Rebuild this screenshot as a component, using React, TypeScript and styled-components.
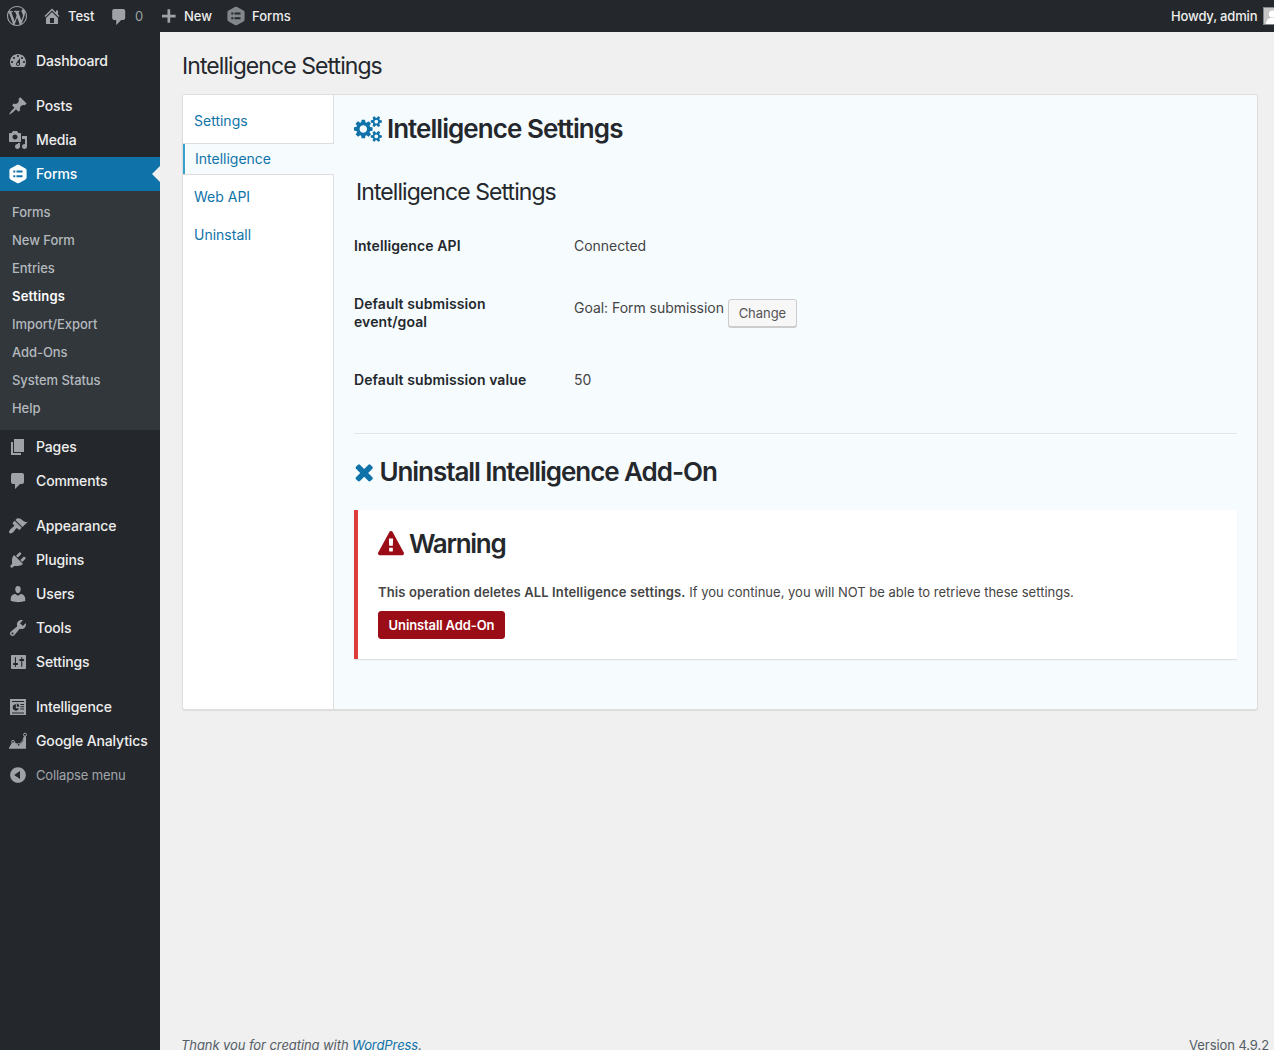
import React from "react";
import styled, { createGlobalStyle } from "styled-components";

const GlobalStyle = createGlobalStyle`
  html, body { margin: 0; padding: 0; height: 100%; overflow: hidden; background: #f0f0f0; }
  body { font-family: Inter, "Open Sans", sans-serif; font-size: 13px; color: #444; }
  * { box-sizing: border-box; }
  a { color: #0f73a9; text-decoration: none; }
  svg { display: block; flex: none; }
`;

/* ---------- icons ---------- */

const dashicons: Record<string, string> = {
  wordpress:
    "M20 10c0-5.51-4.49-10-10-10C4.48 0 0 4.49 0 10c0 5.52 4.48 10 10 10 5.51 0 10-4.48 10-10zM7.78 15.37L4.37 6.22c.55-.02 1.17-.08 1.17-.08.5-.06.44-1.13-.06-1.11 0 0-1.45.11-2.37.11-.18 0-.37 0-.58-.01C4.12 2.69 6.87 1.11 10 1.11c2.33 0 4.45.87 6.05 2.34-.68-.11-1.65.39-1.65 1.58 0 .74.45 1.36.9 2.1.35.61.55 1.36.55 2.46 0 1.49-1.4 5-1.4 5l-3.03-8.37c.54-.02.82-.17.82-.17.5-.05.44-1.25-.06-1.22 0 0-1.44.12-2.38.12-.87 0-2.33-.12-2.33-.12-.5-.03-.56 1.2-.06 1.22l.92.08 1.26 3.41zM17.41 10c.24-.64.74-1.87.43-4.25.7 1.29 1.05 2.71 1.05 4.25 0 3.29-1.73 6.24-4.4 7.78.97-2.59 1.94-5.2 2.92-7.78zM6.1 18.09C3.12 16.65 1.11 13.53 1.11 10c0-1.3.23-2.48.72-3.59C3.25 10.3 4.67 14.2 6.1 18.09zm4.03-6.63l2.58 6.98c-.86.29-1.76.45-2.71.45-.79 0-1.57-.11-2.29-.33.81-2.38 1.62-4.74 2.42-7.1z",
  home: "M16 8.5l1.53 1.53-1.06 1.06L10 4.6l-6.47 6.49-1.06-1.06L10 2.5l4 4v-2h2v4zm-6-2.46l6 5.99V18H4v-5.97zM12 17v-5H8v5h4z",
  plus: "M16.600 8.800v2.600h-5.400v5.300H8.500v-5.300H3V8.800h5.500V3.300h2.700v5.500z",
  dashboard:
    "M3.76 16h12.48c1.1-1.37 1.76-3.11 1.76-5 0-4.42-3.58-8-8-8s-8 3.58-8 8c0 1.89.66 3.63 1.76 5zM10 4c.55 0 1 .45 1 1s-.45 1-1 1-1-.45-1-1 .45-1 1-1zM6 6c.55 0 1 .45 1 1s-.45 1-1 1-1-.45-1-1 .45-1 1-1zm8 0c.55 0 1 .45 1 1s-.45 1-1 1-1-.45-1-1 .45-1 1-1zm-5.37 5.55L12 7v6c0 1.1-.9 2-2 2s-2-.9-2-2c0-.57.24-1.08.63-1.45zM4 10c.55 0 1 .45 1 1s-.45 1-1 1-1-.45-1-1 .45-1 1-1zm12 0c.55 0 1 .45 1 1s-.45 1-1 1-1-.45-1-1 .45-1 1-1zm-5 3c0-.55-.45-1-1-1s-1 .45-1 1 .45 1 1 1 1-.45 1-1z",
  posts:
    "M10.44 3.02l1.82-1.82 6.36 6.35-1.83 1.82c-1.05-.68-2.48-.57-3.41.36l-.75.75c-.92.93-1.04 2.35-.35 3.41l-1.83 1.82-2.41-2.41-2.8 2.79c-.42.42-3.38 2.71-3.8 2.29s1.86-3.39 2.28-3.81l2.79-2.79L4.1 9.36l1.83-1.82c1.05.69 2.48.57 3.4-.36l.75-.75c.93-.92 1.05-2.35.36-3.41z",
  media:
    "M13 11V4c0-.55-.45-1-1-1h-1.67L9 1H5L3.67 3H2c-.55 0-1 .45-1 1v7c0 .55.45 1 1 1h10c.55 0 1-.45 1-1zM7 4.5c1.38 0 2.5 1.12 2.5 2.5S8.38 9.5 7 9.5 4.5 8.38 4.5 7 5.62 4.5 7 4.5zM14 6h5v10.5c0 1.38-1.12 2.5-2.5 2.5S14 17.88 14 16.5s1.12-2.5 2.5-2.5c.17 0 .34.02.5.05V9h-3V6zm-4 8.05V13h2v3.5c0 1.38-1.12 2.5-2.5 2.5S7 17.88 7 16.5 8.12 14 9.5 14c.17 0 .34.02.5.05z",
  pages: "M6 15V2h10v13H6zm-1 1h8v2H3V5h2v11z",
  comments:
    "M5 2h9c1.1 0 2 .9 2 2v7c0 1.1-.9 2-2 2h-2l-5 5v-5H5c-1.1 0-2-.9-2-2V4c0-1.1.9-2 2-2z",
  bubble:
    "M4.200 3h9c1.100 0 2 .9 2 2v7c0 1.100-.9 2-2 2h-2l-5 5v-5h-2c-1.100 0-2-.9-2-2V5c0-1.100.9-2 2-2z",
  appearance:
    "M14.48 11.06L7.41 3.99l1.5-1.5c.5-.56 2.3-.47 3.51.32 1.21.8 1.43 1.28 2.91 2.1 1.18.64 2.45 1.26 4.45.85zm-.71.71L6.7 4.7 4.93 6.47c-.39.39-.39 1.02 0 1.41l1.06 1.06c.39.39.39 1.03 0 1.42-.6.6-1.43 1.11-2.21 1.69-.35.26-.7.53-1.01.84C1.43 14.23.4 16.08 1.4 17.07c.99 1 2.84-.03 4.18-1.36.31-.31.58-.66.85-1.02.57-.78 1.08-1.61 1.69-2.21.39-.39 1.02-.39 1.41 0l1.06 1.06c.39.39 1.02.39 1.41 0z",
  plugins:
    "M13.11 4.36L9.87 7.6 8 5.73l3.24-3.24c.35-.34 1.05-.2 1.56.32.52.51.66 1.21.31 1.55zm-8 1.77l.91-1.12 9.01 9.01-1.19.84c-.71.71-2.63 1.16-3.82 1.16H6.14L4.9 17.26c-.59.59-1.54.59-2.12 0-.59-.58-.59-1.53 0-2.12l1.24-1.24v-3.88c0-1.13.4-3.19 1.09-3.89zm7.26 3.97l3.24-3.24c.34-.35 1.04-.21 1.55.31.52.51.66 1.21.31 1.55l-3.24 3.25z",
  users:
    "M10 9.25c-2.27 0-2.73-3.44-2.73-3.44C7 4.02 7.82 2 9.97 2c2.16 0 2.98 2.02 2.71 3.81 0 0-.41 3.44-2.68 3.44zm0 2.57L12.72 10c2.39 0 4.52 2.33 4.52 4.53v2.49s-3.65 1.13-7.24 1.13c-3.65 0-7.24-1.13-7.24-1.13v-2.49c0-2.25 1.94-4.48 4.47-4.48z",
  tools:
    "M16.68 9.77c-1.34 1.34-3.3 1.67-4.95.99l-5.41 6.52c-.99.99-2.59.99-3.58 0s-.99-2.59 0-3.57l6.52-5.42c-.68-1.65-.35-3.61.99-4.95 1.28-1.28 3.12-1.62 4.72-1.06l-2.89 2.89 2.82 2.82 2.86-2.87c.53 1.58.18 3.39-1.08 4.65zM3.81 16.21c.4.39 1.04.39 1.43 0 .4-.4.4-1.04 0-1.43-.39-.4-1.03-.4-1.43 0-.39.39-.39 1.03 0 1.43z",
  settings:
    "M18 16V4c0-.6-.4-1-1-1H4c-.6 0-1 .4-1 1v12c0 .6.4 1 1 1h13c.6 0 1-.4 1-1zM8 11h1.200c.55 0 .8.45.8 1s-.25 1-.8 1H8v1.500c0 .28-.22.5-.5.5s-.6-.22-.6-.5V13H5.800c-.55 0-.8-.45-.8-1s.25-1 .8-1h1.100V5.500c0-.28.32-.5.6-.5s.5.22.5.5V11zm5.200-2h-1.200c-.55 0-.8-.45-.8-1s.25-1 .8-1h1.200V5.500c0-.28.22-.5.5-.5s.6.22.6.5V7h1.100c.55 0 .8.45.8 1s-.25 1-.8 1h-1.100v5.500c0 .28-.32.5-.6.5s-.5-.22-.5-.5V9z",
  collapse:
    "M10 2.160c4.330 0 7.840 3.510 7.840 7.840s-3.510 7.840-7.840 7.840S2.160 14.330 2.160 10 5.710 2.160 10 2.160zm2 11.720V6.120L6.180 9.970z",
  gravity:
    "M10 .7c.4 0 .8.1 1.200.3l6.300 3.500c.7.400 1.100 1.100 1.100 1.900v7.200c0 .8-.4 1.500-1.100 1.900L11.200 19c-.7.4-1.600.4-2.300 0l-6.400-3.500c-.7-.4-1.100-1.100-1.100-1.900V6.400c0-.8.4-1.500 1.100-1.900L8.900 1c.3-.2.700-.3 1.100-.3zM5.300 6.500v2h2v-2zm3.200 0v2h6v-2zM5.300 11.300v2h2v-2zm3.200 0v2h6v-2z",
  report:
    "M2 2h16v16H2zM4 4v1h12V4zm0 11.500v1h12v-1zM12.400 7v1H16V7zm0 2.300v1H16v-1zm0 2.300v1H16v-1zM8 7.200A3.200 3.200 0 1 0 11 11.200H7.800zM8.800 6.500v3.300h2.500c0-1.800-1-3.100-2.500-3.300z",
};

const Dashicon = ({ name }: { name: string }) => (
  <svg width="20" height="20" viewBox="0 0 20 20" fill="currentColor" fillRule="evenodd">
    <path d={dashicons[name]} />
  </svg>
);

const AnalyticsIcon = () => (
  <svg width="20" height="20" viewBox="0 0 20 20">
    <path d="M1 17.800V17l4-6.200 5.700 3.600L15 10.500l1.500-5 1.500-.5v12.800z" fill="currentColor" />
    <path d="M1.500 17L5 10.800l5.700 3.200 4-4.200 2.400-6.300" fill="none" stroke="currentColor" strokeWidth="1" />
    <g fill="#24282d" stroke="currentColor" strokeWidth="1">
      <circle cx="5" cy="10.800" r="1.400" />
      <circle cx="10.700" cy="13.800" r="1.300" />
      <circle cx="17" cy="3.700" r="1.500" />
    </g>
  </svg>
);

const CogsIcon = () => (
  <svg width="27.900" height="26" viewBox="0 0 1920 1792" fill="currentColor">
    <path d="M896 896q0-106-75-181t-181-75-181 75-75 181 75 181 181 75 181-75 75-181zm768 512q0-52-38-90t-90-38-90 38-38 90q0 53 37.5 90.5t90.5 37.5 90.5-37.5 37.5-90.5zm0-1024q0-52-38-90t-90-38-90 38-38 90q0 53 37.5 90.5t90.5 37.5 90.5-37.5 37.5-90.5zm-384 421v185q0 10-7 19.5t-16 10.5l-155 24q-11 35-32 76 34 48 90 115 7 11 7 20 0 12-7 19-23 30-82.5 89.5t-78.5 59.5q-11 0-21-7l-115-90q-37 19-77 31-11 108-23 155-7 24-30 24h-186q-11 0-20-7.5t-10-17.5l-23-153q-34-10-75-31l-118 89q-7 7-20 7-11 0-21-8-144-133-144-160 0-9 7-19 10-14 41-53t47-61q-23-44-35-82l-152-24q-10-1-17-9.5t-7-19.5v-185q0-10 7-19.5t16-10.5l155-24q11-35 32-76-34-48-90-115-7-11-7-20 0-12 7-20 22-30 82-89t79-59q11 0 21 7l115 90q34-18 77-32 11-108 23-154 7-24 30-24h186q11 0 20 7.5t10 17.5l23 153q34 10 75 31l118-89q8-7 20-7 11 0 21 8 144 133 144 160 0 8-7 19-12 16-42 54t-45 60q23 48 34 82l152 23q10 2 17 10.5t7 19.5zm640 533v140q0 16-149 31-12 27-30 52 51 113 51 138 0 4-4 7-122 71-124 71-8 0-46-47t-52-68q-20 2-30 2t-30-2q-14 21-52 68t-46 47q-2 0-124-71-4-3-4-7 0-25 51-138-18-25-30-52-149-15-149-31v-140q0-16 149-31 13-29 30-52-51-113-51-138 0-4 4-7 4-2 35-20t59-34 30-16q8 0 46 46.5t52 67.5q20-2 30-2t30 2q51-71 92-112l6-2q4 0 124 70 4 3 4 7 0 25-51 138 17 23 30 52 149 15 149 31zm0-1024v140q0 16-149 31-12 27-30 52 51 113 51 138 0 4-4 7-122 71-124 71-8 0-46-47t-52-68q-20 2-30 2t-30-2q-14 21-52 68t-46 47q-2 0-124-71-4-3-4-7 0-25 51-138-18-25-30-52-149-15-149-31v-140q0-16 149-31 13-29 30-52-51-113-51-138 0-4 4-7 4-2 35-20t59-34 30-16q8 0 46 46.5t52 67.5q20-2 30-2t30 2q51-71 92-112l6-2q4 0 124 70 4 3 4 7 0 25-51 138 17 23 30 52 149 15 149 31z" />
  </svg>
);

const TimesIcon = () => (
  <svg width="20.400" height="26" viewBox="192 0 1408 1792" fill="currentColor">
    <path d="M1490 1322q0 40-28 68l-136 136q-28 28-68 28t-68-28l-294-294-294 294q-28 28-68 28t-68-28l-136-136q-28-28-28-68t28-68l294-294-294-294q-28-28-28-68t28-68l136-136q28-28 68-28t68 28l294 294 294-294q28-28 68-28t68 28l136 136q28 28 28 68t-28 68l-294 294 294 294q28 28 28 68z" />
  </svg>
);

const WarningIcon = () => (
  <svg width="26" height="26" viewBox="0 0 1792 1792" fill="currentColor">
    <path d="M1024 1375v-190q0-14-9.5-23.5t-22.5-9.5h-192q-13 0-22.5 9.5t-9.5 23.5v190q0 14 9.5 23.5t22.5 9.5h192q13 0 22.5-9.5t9.5-23.5zm-2-374l18-459q0-12-10-19-13-11-24-11h-220q-11 0-24 11-10 7-10 21l17 457q0 10 10 16.5t24 6.5h185q14 0 23.5-6.5t10.5-16.5zm-14-934l768 1408q35 63-2 126-17 29-46.5 46t-63.5 17h-1536q-34 0-63.5-17t-46.5-46q-37-63-2-126l768-1408q17-31 47-49t65-18 65 18 47 49z" />
  </svg>
);

/* ---------- shell ---------- */

const Shell = styled.div`
  display: flex;
  flex-direction: column;
  height: 1050px;
  overflow: hidden;
`;

const AdminBar = styled.header`
  display: flex;
  justify-content: space-between;
  flex: none;
  height: 32px;
  background: #24282d;
  color: #eee;
  font-size: 13px;
  font-weight: 500;
`;

const BarGroup = styled.div`
  display: flex;
  align-items: center;
`;

const BarItem = styled.div<{ $w: number; $gap?: number; $dim?: boolean; $icon?: string }>`
  display: flex;
  align-items: center;
  gap: ${(p) => p.$gap ?? 6}px;
  width: ${(p) => p.$w}px;
  height: 32px;
  padding-left: 7px;
  white-space: nowrap;
  color: ${(p) => (p.$dim ? "#9fa3a8" : "#eee")};
  font-weight: ${(p) => (p.$dim ? 400 : 500)};
  svg { color: ${(p) => p.$icon ?? "#9fa3a8"}; }
`;

const Account = styled.div`
  display: flex;
  align-items: center;
  gap: 6px;
  width: 103px;
  height: 32px;
  overflow: hidden;
  white-space: nowrap;
  letter-spacing: -0.16px;
`;

const Avatar = styled.div`
  flex: none;
  width: 18px;
  height: 18px;
  border: 1px solid #82878c;
  background: #c6c6c6;
`;

const Columns = styled.div`
  display: flex;
  flex: 1;
  min-height: 0;
`;

const Sidebar = styled.nav`
  flex: none;
  width: 160px;
  padding-top: 12px;
  background: #24282d;
`;

const MenuItem = styled.div<{ $active?: boolean; $gap?: boolean; $muted?: boolean }>`
  position: relative;
  display: flex;
  align-items: center;
  gap: 8px;
  height: 34px;
  margin-top: ${(p) => (p.$gap ? 11 : 0)}px;
  padding-left: 8px;
  background: ${(p) => (p.$active ? "#0f73a9" : "transparent")};
  color: ${(p) => (p.$active ? "#fff" : p.$muted ? "#a0a5aa" : "#eee")};
  font-size: ${(p) => (p.$muted ? 13 : 14)}px;
  font-weight: ${(p) => (p.$muted ? 400 : 500)};
  letter-spacing: -0.13px;
  white-space: nowrap;
  svg { color: ${(p) => (p.$active ? "#fff" : "#9fa3a8")}; }
`;

const MenuText = styled.span`
  padding-bottom: 2px;
`;

const Arrow = styled.span`
  position: absolute;
  right: 0;
  top: 9px;
  border: 8px solid transparent;
  border-left-width: 0;
  border-right-color: #f0f0f0;
`;

const Submenu = styled.div`
  padding: 7px 0 8px;
  background: #32373c;
`;

const SubItem = styled.div<{ $current?: boolean }>`
  display: flex;
  align-items: center;
  height: 28px;
  padding-left: 12px;
  font-size: 13px;
  font-weight: ${(p) => (p.$current ? 600 : 500)};
  letter-spacing: ${(p) => (p.$current ? 0.2 : -0.06)}px;
  color: ${(p) => (p.$current ? "#fff" : "#b4b9be")};
`;

const Main = styled.main`
  display: flex;
  flex-direction: column;
  flex: 1;
  min-width: 0;
  padding: 0 16px 0 22px;
`;

const PageTitle = styled.h1`
  margin: 19px 0 13px;
  font-size: 23px;
  font-weight: 400;
  line-height: 30px;
  letter-spacing: -0.93px;
  color: #24282d;
`;

const Panel = styled.section`
  display: flex;
  height: 616px;
  border: 1px solid #dedede;
  border-radius: 3px;
  box-shadow: 0 1px 1px rgba(0, 0, 0, 0.08);
  background: #f6fbfe;
  overflow: clip;
`;

const Tabs = styled.div`
  display: flex;
  flex-direction: column;
  flex: none;
  width: 151px;
  background: #fff;
`;

const TabSpace = styled.div<{ $h?: number }>`
  flex: ${(p) => (p.$h ? "none" : 1)};
  height: ${(p) => p.$h ?? 0}px;
  border-right: 1px solid #dedede;
`;

const Tab = styled.a<{ $active?: boolean }>`
  display: flex;
  align-items: center;
  flex: none;
  height: ${(p) => (p.$active ? 32 : 38)}px;
  padding: 0 0 2px 11px;
  font-size: 14px;
  border: 0 solid #dedede;
  ${(p) =>
    p.$active
      ? "background:#f6fbfe;border-width:1px 0;box-shadow:inset 2px 0 #35a2cb;padding-left:12px;"
      : "border-right-width:1px;"}
`;

const Content = styled.div`
  flex: 1;
  padding: 17px 20px 0;
`;

const SectionHeading = styled.h3<{ $tone?: string; $track?: number }>`
  display: flex;
  align-items: center;
  gap: 5px;
  height: 34px;
  margin: 0;
  font-size: 26px;
  font-weight: 600;
  letter-spacing: ${(p) => p.$track ?? -0.95}px;
  color: #24282d;
  white-space: nowrap;
  svg { color: ${(p) => p.$tone ?? "#0f73a9"}; }
  span { padding-bottom: 2px; }
`;

const SubHeading = styled.h4`
  margin: 31px 0 30px 2px;
  font-size: 23px;
  font-weight: 400;
  line-height: 30px;
  letter-spacing: -0.93px;
  color: #24282d;
`;

const Fields = styled.div`
  display: grid;
  grid-template-columns: 220px 1fr;
  row-gap: 40px;
  font-size: 14px;
  line-height: 18px;
`;

const Label = styled.div`
  width: 180px;
  font-weight: 600;
  letter-spacing: 0.09px;
  color: #24282d;
`;

const Value = styled.div`
  display: flex;
  height: 18px;
  gap: 4px;
  letter-spacing: -0.04px;
`;

const GoalText = styled.span`
  padding-top: 4px;
`;

const Button = styled.button<{ $danger?: boolean; $w: number }>`
  flex: none;
  width: ${(p) => p.$w}px;
  height: 28px;
  margin: ${(p) => (p.$danger ? "9px 0 0" : "4px 0 0")};
  padding: 0;
  border: 1px solid ${(p) => (p.$danger ? "#9b0d16" : "#ccc")};
  border-radius: 3px;
  background: ${(p) => (p.$danger ? "#9b0d16" : "#f7f7f7")};
  box-shadow: ${(p) => (p.$danger ? "none" : "0 1px 0 #ccc")};
  color: ${(p) => (p.$danger ? "#fff" : "#555")};
  font-family: inherit;
  font-size: 13px;
  font-weight: ${(p) => (p.$danger ? 600 : 400)};
  letter-spacing: ${(p) => (p.$danger ? -0.12 : -0.05)}px;
`;

const Divider = styled.hr`
  height: 2px;
  margin: 44px 0 20px;
  border: 0;
  border-top: 1px solid #e2e4e6;
  background: #fbfdff;
`;

const Notice = styled.div`
  height: 149px;
  margin-top: 21px;
  padding: 17px 20px 0;
  border-left: 4px solid #dd3d3d;
  background: #fff;
  box-shadow: 0 1px 1px rgba(0, 0, 0, 0.1);
`;

const NoticeText = styled.p`
  margin: 22px 0 0;
  font-size: 13px;
  line-height: 19px;
  white-space: nowrap;
  strong { font-weight: 600; letter-spacing: 0.13px; }
`;

const Footer = styled.footer`
  display: flex;
  justify-content: space-between;
  flex: none;
  height: 14px;
  margin: auto -11px 0 -1px;
  font-size: 13px;
  line-height: 19px;
  letter-spacing: -0.08px;
  color: #555d66;
  white-space: nowrap;
`;

const upper = [
  { icon: "dashboard", label: "Dashboard" },
  { icon: "posts", label: "Posts", gap: true },
  { icon: "media", label: "Media" },
];

const submenu = ["Forms", "New Form", "Entries", "Settings", "Import/Export", "Add-Ons", "System Status", "Help"];

const lower = [
  { icon: "pages", label: "Pages" },
  { icon: "comments", label: "Comments" },
  { icon: "appearance", label: "Appearance", gap: true },
  { icon: "plugins", label: "Plugins" },
  { icon: "users", label: "Users" },
  { icon: "tools", label: "Tools" },
  { icon: "settings", label: "Settings" },
  { icon: "report", label: "Intelligence", gap: true },
];

export default function App() {
  return (
    <Shell>
      <GlobalStyle />
      <AdminBar>
        <BarGroup>
          <BarItem $w={35}><Dashicon name="wordpress" /></BarItem>
          <BarItem $w={68}><Dashicon name="home" />Test</BarItem>
          <BarItem $w={49} $dim $gap={5}><Dashicon name="bubble" />0</BarItem>
          <BarItem $w={67} $gap={5}><Dashicon name="plus" />New</BarItem>
          <BarItem $w={80} $icon="#82878c"><Dashicon name="gravity" />Forms</BarItem>
        </BarGroup>
        <Account>
          Howdy, admin
          <Avatar>
            <svg width="16" height="16" viewBox="0 0 16 16" fill="#fff">
              <circle cx="8.500" cy="6" r="3.600" />
              <path d="M2 16c0-4 2.500-5.500 4.500-6h4c2 .5 4.500 2 4.500 6z" />
            </svg>
          </Avatar>
        </Account>
      </AdminBar>
      <Columns>
        <Sidebar>
          {upper.map((m) => (
            <MenuItem key={m.label} $gap={m.gap}><Dashicon name={m.icon} /><MenuText>{m.label}</MenuText></MenuItem>
          ))}
          <MenuItem $active><Dashicon name="gravity" /><MenuText>Forms</MenuText><Arrow /></MenuItem>
          <Submenu>
            {submenu.map((s) => <SubItem key={s} $current={s === "Settings"}>{s}</SubItem>)}
          </Submenu>
          {lower.map((m) => (
            <MenuItem key={m.label} $gap={m.gap}><Dashicon name={m.icon} /><MenuText>{m.label}</MenuText></MenuItem>
          ))}
          <MenuItem><AnalyticsIcon /><MenuText>Google Analytics</MenuText></MenuItem>
          <MenuItem $muted><Dashicon name="collapse" />Collapse menu</MenuItem>
        </Sidebar>
        <Main>
          <PageTitle>Intelligence Settings</PageTitle>
          <Panel>
            <Tabs>
              <TabSpace $h={7} />
              <Tab>Settings</Tab>
              <TabSpace $h={3} />
              <Tab $active>Intelligence</Tab>
              <TabSpace $h={3} />
              <Tab>Web API</Tab>
              <Tab>Uninstall</Tab>
              <TabSpace />
            </Tabs>
            <Content>
              <SectionHeading><CogsIcon /><span>Intelligence Settings</span></SectionHeading>
              <SubHeading>Intelligence Settings</SubHeading>
              <Fields>
                <Label>Intelligence API</Label>
                <Value>Connected</Value>
                <Label>Default submission event/goal</Label>
                <Value><GoalText>Goal: Form submission</GoalText><Button $w={69}>Change</Button></Value>
                <Label>Default submission value</Label>
                <Value>50</Value>
              </Fields>
              <Divider />
              <SectionHeading $track={-1.05}><TimesIcon /><span>Uninstall Intelligence Add-On</span></SectionHeading>
              <Notice>
                <SectionHeading $tone="#9b0d16" $track={-1.3}><WarningIcon /><span>Warning</span></SectionHeading>
                <NoticeText>
                  <strong>This operation deletes ALL Intelligence settings.</strong> If you continue, you will NOT be able to retrieve these settings.
                </NoticeText>
                <Button $danger $w={127}>Uninstall Add-On</Button>
              </Notice>
            </Content>
          </Panel>
          <Footer>
            <em>Thank you for creating with <a>WordPress</a>.</em>
            <span>Version 4.9.2</span>
          </Footer>
        </Main>
      </Columns>
    </Shell>
  );
}
